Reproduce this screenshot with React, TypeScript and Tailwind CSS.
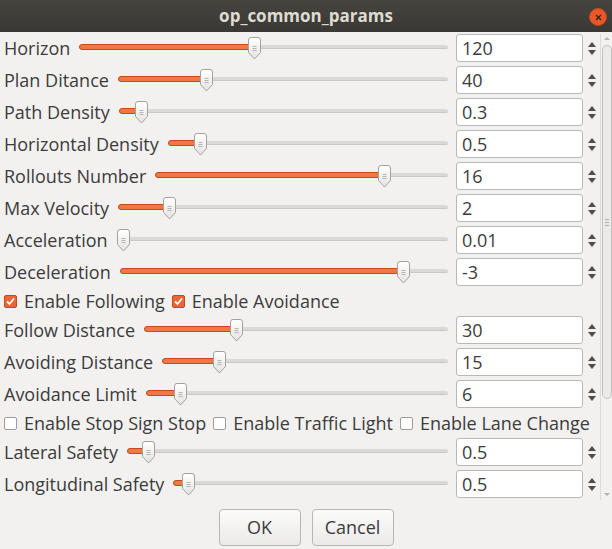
import { FC } from "react";

type Param = { label: string; value: string; pct: number };

const top: Param[] = [
  { label: "Horizon", value: "120", pct: 47.5 },
  { label: "Plan Ditance", value: "40", pct: 26 },
  { label: "Path Density", value: "0.3", pct: 5.3 },
  { label: "Horizontal Density", value: "0.5", pct: 9.7 },
  { label: "Rollouts Number", value: "16", pct: 79.7 },
  { label: "Max Velocity", value: "2", pct: 14.2 },
  { label: "Acceleration", value: "0.01", pct: 0 },
  { label: "Deceleration", value: "-3", pct: 88 },
];

const middle: Param[] = [
  { label: "Follow Distance", value: "30", pct: 29.6 },
  { label: "Avoiding Distance", value: "15", pct: 18.7 },
  { label: "Avoidance Limit", value: "6", pct: 9.7 },
];

const bottom: Param[] = [
  { label: "Lateral Safety", value: "0.5", pct: 4.9 },
  { label: "Longitudinal Safety", value: "0.5", pct: 3.5 },
];

const Handle: FC = () => (
  <svg width="13" height="23" viewBox="0 0 13 23">
    <defs>
      <linearGradient id="hg" x1="0" y1="0" x2="0" y2="1">
        <stop offset="0" stopColor="#ffffff" />
        <stop offset="1" stopColor="#e4e3e0" />
      </linearGradient>
    </defs>
    <path
      d="M3 0.5 H10 Q12.5 0.5 12.5 3 V15.5 L6.5 22 L0.5 15.5 V3 Q0.5 0.5 3 0.5 Z"
      fill="url(#hg)"
      stroke="#a3a29e"
    />
    <path d="M4.5 9.5 H8.5 M4.5 11.5 H8.5 M4.5 13.5 H8.5" stroke="#b5b4b0" />
  </svg>
);

const Slider: FC<{ pct: number }> = ({ pct }) => (
  <div className="relative flex-1 h-7">
    <div className="absolute left-0 right-0 top-[11px] h-[4px] rounded-full bg-[#dad9d6] border-b border-[#c9c8c5]" />
    <div
      className="absolute left-0 top-[10px] h-[6px] rounded-full bg-[#f07746] border border-[#c9481c]"
      style={{ width: `calc(${pct}% - ${(pct * 13) / 100}px + 6px)` }}
    />
    <div
      className="absolute top-[3px]"
      style={{ left: `calc(${pct}% - ${(pct * 13) / 100}px)` }}
    >
      <Handle />
    </div>
  </div>
);

const SpinArrows: FC = () => (
  <div className="w-[17px] flex flex-col items-center justify-center gap-[3px]">
    <div className="w-0 h-0 border-l-[4px] border-r-[4px] border-b-[5px] border-l-transparent border-r-transparent border-b-[#4d4d4d]" />
    <div className="w-0 h-0 border-l-[4px] border-r-[4px] border-t-[5px] border-l-transparent border-r-transparent border-t-[#4d4d4d]" />
  </div>
);

const Row: FC<{ p: Param }> = ({ p }) => (
  <div className="flex items-center h-7">
    <span className="pl-1 pr-[9px] whitespace-nowrap">{p.label}</span>
    <Slider pct={p.pct} />
    <div className="ml-2 w-[127px] h-7 bg-white border border-[#b9b8b5] rounded-[3px] pl-[5px] flex items-center">
      {p.value}
    </div>
    <SpinArrows />
  </div>
);

const Check: FC<{ on: boolean; label: string }> = ({ on, label }) => (
  <div className="flex items-center gap-[7px] mr-[7px]">
    {on ? (
      <div className="w-[13px] h-[13px] rounded-[2px] bg-[#eb6536] border border-[#c24a1e] flex items-center justify-center">
        <svg width="9" height="9" viewBox="0 0 9 9">
          <path d="M1 4.5 L3.5 7 L8 1.5" fill="none" stroke="#ffffff" strokeWidth="1.8" />
        </svg>
      </div>
    ) : (
      <div className="w-[13px] h-[13px] rounded-[2px] bg-white border border-[#9d9c98]" />
    )}
    <span className="whitespace-nowrap">{label}</span>
  </div>
);

const Scrollbar: FC = () => (
  <div className="w-3 h-[466px] border-l border-[#dcdbd8] flex flex-col items-center relative">
    <div className="mt-[3px] w-0 h-0 border-l-[3px] border-r-[3px] border-b-[3px] border-l-transparent border-r-transparent border-b-[#b4b3b0]" />
    <div className="mt-[5px] w-[10px] h-[354px] rounded-full border border-[#c2c1be] bg-[#ebeae8] flex flex-col items-center justify-center gap-[2px]">
      <div className="w-[4px] h-px bg-[#b1b0ac]" />
      <div className="w-[4px] h-px bg-[#b1b0ac]" />
      <div className="w-[4px] h-px bg-[#b1b0ac]" />
    </div>
    <div className="absolute bottom-[4px] w-0 h-0 border-l-[3px] border-r-[3px] border-t-[3px] border-l-transparent border-r-transparent border-t-[#b4b3b0]" />
  </div>
);

const App: FC = () => {
  return (
    <div
      className="w-[612px] h-[549px] bg-[#f2f1f0] text-[#3c3c3c] text-[18px] flex flex-col overflow-hidden"
      style={{ fontFamily: '"Open Sans", "Noto Sans", sans-serif' }}
    >
      <div className="h-8 shrink-0 bg-gradient-to-b from-[#45443f] to-[#393834] flex items-center justify-center relative">
        <span className="font-bold text-[#dfdbd2] text-[17px]">op_common_params</span>
        <div className="absolute right-[5px] top-[8px] w-[18px] h-[18px] rounded-full bg-[#e9582b] border border-[#c8461a] flex items-center justify-center">
          <svg width="7" height="7" viewBox="0 0 7 7">
            <path d="M1 1 L6 6 M6 1 L1 6" stroke="#3a2218" strokeWidth="1.4" />
          </svg>
        </div>
      </div>
      <div className="flex pt-[2px]">
        <div className="w-[600px] flex flex-col gap-1">
          {top.map((p) => (
            <Row key={p.label} p={p} />
          ))}
          <div className="flex items-center h-[22px] pl-1">
            <Check on label="Enable Following" />
            <Check on label="Enable Avoidance" />
          </div>
          {middle.map((p) => (
            <Row key={p.label} p={p} />
          ))}
          <div className="flex items-center h-[22px] pl-1">
            <Check on={false} label="Enable Stop Sign Stop" />
            <Check on={false} label="Enable Traffic Light" />
            <Check on={false} label="Enable Lane Change" />
          </div>
          {bottom.map((p) => (
            <Row key={p.label} p={p} />
          ))}
        </div>
        <Scrollbar />
      </div>
      <div className="flex justify-center gap-[11px] mt-[9px]">
        <button className="w-[82px] h-[37px] rounded-[4px] border border-[#b7b6b3] bg-gradient-to-b from-[#fbfbfa] to-[#ebeae8]">
          OK
        </button>
        <button className="w-[82px] h-[37px] rounded-[4px] border border-[#b7b6b3] bg-gradient-to-b from-[#fbfbfa] to-[#ebeae8]">
          Cancel
        </button>
      </div>
    </div>
  );
};

export default App;
